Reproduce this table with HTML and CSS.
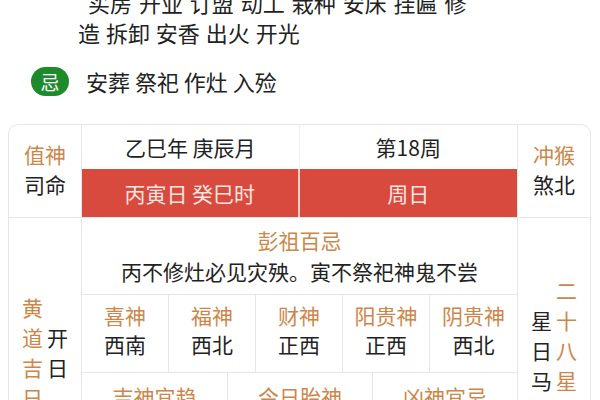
FILE: index.html
```html
<!DOCTYPE html>
<html lang="zh-CN">
<head>
<meta charset="utf-8">
<link rel="stylesheet" href="styles.css">
</head>
<body>
<div class="yi">
  <div class="yi-line first">买房 开业 订盟 动工 栽种 安床 挂匾 修</div>
  <div class="yi-line">造 拆卸 安香 出火 开光</div>
</div>
<div class="ji">
  <span class="badge">忌</span>
  <span class="ji-text">安葬 祭祀 作灶 入殓</span>
</div>
<div class="card">
  <div class="row row1">
    <div class="side">
      <div class="gold">值神</div>
      <div>司命</div>
    </div>
    <div class="mid-top">
      <div class="cell-top sep">乙巳年 庚辰月</div>
      <div class="cell-top">第18周</div>
      <div class="cell-red red-sep">丙寅日 癸巳时</div>
      <div class="cell-red">周日</div>
    </div>
    <div class="side side-right">
      <div class="gold">冲猴</div>
      <div>煞北</div>
    </div>
  </div>
  <div class="row row2">
    <div class="side vert-wrap">
      <div class="vert gold">黄道吉日</div>
      <div class="vert">开日</div>
    </div>
    <div class="mid">
      <div class="pengzu">
        <div class="gold">彭祖百忌</div>
        <div>丙不修灶必见灾殃。寅不祭祀神鬼不尝</div>
      </div>
      <div class="gods">
        <div class="god"><div class="gold">喜神</div><div>西南</div></div>
        <div class="god"><div class="gold">福神</div><div>西北</div></div>
        <div class="god"><div class="gold">财神</div><div>正西</div></div>
        <div class="god"><div class="gold">阳贵神</div><div>正西</div></div>
        <div class="god"><div class="gold">阴贵神</div><div>西北</div></div>
      </div>
      <div class="tri">
        <div class="tri-cell gold">吉神宜趋</div>
        <div class="tri-cell gold">今日胎神</div>
        <div class="tri-cell gold">凶神宜忌</div>
      </div>
    </div>
    <div class="side side-right vert-wrap vert-right">
      <div class="vert">星日马</div>
      <div class="vert gold">二十八星宿</div>
    </div>
  </div>
</div>
</body>
</html>
```
FILE: styles.css
```css
* { box-sizing: border-box; }
html, body { margin: 0; padding: 0; background: #fff; }
body {
  width: 600px;
  height: 400px;
  overflow: hidden;
  font-family: "Noto Sans CJK SC", "Noto Sans", sans-serif;
  color: #222;
}
.yi {
  margin-top: -13px;
  padding-left: 78px;
  font-size: 22px;
  line-height: 30px;
  white-space: nowrap;
}
.yi-line { word-spacing: 1px; }
.yi-line.first {
  padding-left: 10px;
  word-spacing: 2px;
}
.ji {
  display: flex;
  align-items: center;
  margin-top: 19px;
  padding-left: 31px;
  height: 30px;
}
.badge {
  display: inline-flex;
  align-items: center;
  justify-content: center;
  width: 38px;
  height: 29px;
  border-radius: 15px;
  background: #1d8a2b;
  color: #fff;
  font-size: 19px;
  line-height: 1;
}
.ji-text {
  margin-left: 17px;
  font-size: 22px;
  line-height: 30px;
}
.card {
  margin: 28px 0 0 8px;
  width: 583px;
  border: 1px solid #e6e6e6;
  border-radius: 10px;
  overflow: hidden;
}
.row {
  display: grid;
  grid-template-columns: 73px 436px 1fr;
}
.row1 { height: 92px; }
.row2 { height: 268px; border-top: 1px solid #e6e6e6; }
.side {
  display: flex;
  flex-direction: column;
  align-items: center;
  justify-content: center;
  font-size: 21px;
  line-height: 30px;
}
.row1 .side { padding-bottom: 4px; }
.row .side:first-child { border-right: 1px solid #e6e6e6; }
.mid, .mid-top { border-right: 1px solid #e6e6e6; }
.gold { color: #cd8649; }
.mid-top {
  display: grid;
  grid-template-columns: 1fr 1fr;
  grid-template-rows: 44px 48px;
}
.cell-top {
  display: flex;
  align-items: center;
  justify-content: center;
  font-size: 21px;
}
.sep { border-right: 1px solid #f0f0f0; }
.cell-red {
  display: flex;
  align-items: center;
  justify-content: center;
  background: #d84a3e;
  color: #fde6e1;
  font-size: 21px;
}
.red-sep { border-right: 2px solid #f6cfc8; }
.vert-wrap {
  flex-direction: row;
  align-items: center;
  gap: 4px;
}
.vert-right { padding-bottom: 4px; }
.vert {
  width: 21px;
  font-size: 21px;
  line-height: 30px;
  word-break: break-all;
  text-align: center;
}
.mid { display: flex; flex-direction: column; }
.pengzu {
  height: 77px;
  border-bottom: 1px solid #e6e6e6;
  display: flex;
  flex-direction: column;
  align-items: center;
  justify-content: center;
  font-size: 21px;
  line-height: 31px;
}
.gods {
  display: grid;
  grid-template-columns: repeat(5, 1fr);
  height: 78px;
  border-bottom: 1px solid #e6e6e6;
}
.god {
  display: flex;
  flex-direction: column;
  align-items: center;
  justify-content: center;
  font-size: 21px;
  line-height: 29px;
  padding-bottom: 7px;
  border-right: 1px solid #e6e6e6;
}
.god:last-child { border-right: none; }
.tri {
  display: grid;
  grid-template-columns: 146px 145px 1fr;
}
.tri-cell {
  text-align: center;
  font-size: 21px;
  line-height: 30px;
  padding-top: 8px;
  border-right: 1px solid #e6e6e6;
}
.tri-cell:last-child { border-right: none; }
```
